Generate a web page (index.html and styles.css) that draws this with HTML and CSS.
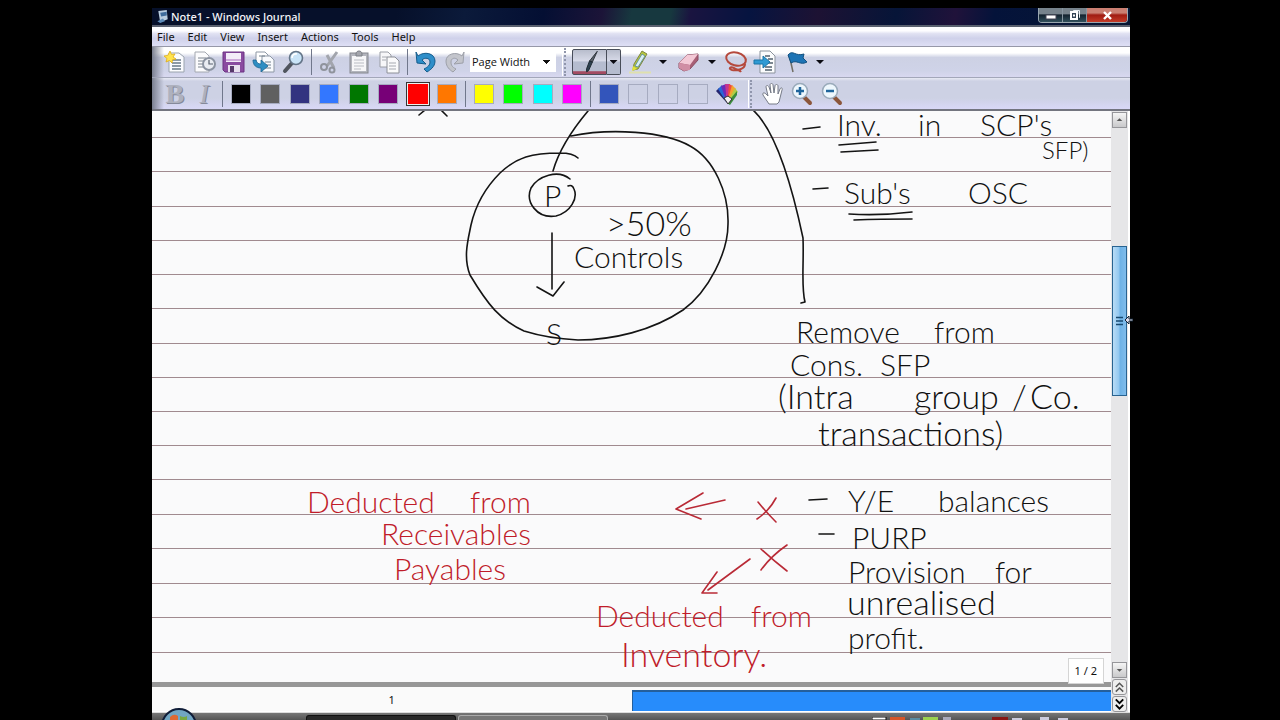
FILE: index.html
```html
<!DOCTYPE html>
<html lang="en">
<head>
<meta charset="utf-8">
<title>Note1 - Windows Journal</title>
<link rel="stylesheet" href="styles.css">
</head>
<body>
<div class="window">
  <header class="titlebar">
    <svg class="app-icon" viewBox="0 0 14 16"><path d="M2 2l9-1 1 10-8 3z" fill="#b9cde0"/><path d="M4 4l7-1v4l-6 1z" fill="#3f6c9c"/><path d="M1 13l6-3 2 3-5 2z" fill="#5d8bb8"/></svg>
    <h1 class="title">Note1 - Windows Journal</h1>
    <div class="caption-buttons">
      <button class="cap" aria-label="Minimize"><svg viewBox="0 0 24 15"><rect x="7" y="7" width="10" height="4" fill="#fff" stroke="#445"/></svg></button>
      <button class="cap" aria-label="Restore"><svg viewBox="0 0 24 15"><path d="M10.500 3V2.500h6v7H16" fill="none" stroke="#e8eef2"/><rect x="8" y="4" width="6" height="7" fill="#345" stroke="#fff" stroke-width="2"/><rect x="10" y="6.500" width="2" height="2" fill="#fff"/></svg></button>
      <button class="cap cap-close" aria-label="Close"><svg viewBox="0 0 40 15"><path d="M17 4l7 7M24 4l-7 7" stroke="#fff" stroke-width="2.400"/></svg></button>
    </div>
  </header>

  <nav class="menubar">
    <button>File</button><button>Edit</button><button>View</button><button>Insert</button><button>Actions</button><button>Tools</button><button>Help</button>
  </nav>

  <div class="toolbar" role="toolbar" aria-label="Standard">
    <div class="group g5">
      <button aria-label="New note"><svg viewBox="0 0 24 24"><path d="M6 3h10l5 4v15H6z" fill="#fbfcff" stroke="#9aa3ad"/><path d="M9 10h9M9 13h9M9 16h9M9 19h9" stroke="#697989" stroke-width="1.300"/><path d="M7 1l1.500 3.500L12 4l-2 3 3 2-3.500.8L9 13l-2.500-2.500L3 12l1-3.500L1 6l3.800-.6z" fill="#ffe34d" stroke="#e0ad17" stroke-width=".8"/></svg></button>
      <button aria-label="Note history"><svg viewBox="0 0 24 24"><path d="M3 2h10l4 4v16H3z" fill="#fbfbfd" stroke="#a4a8b0"/><path d="M6 8h8M6 11h6M6 14h5M6 17h5" stroke="#7d858f"/><circle cx="17" cy="14" r="6" fill="#e9ecf2" stroke="#8b93a1" stroke-width="2"/><path d="M17 10v4h4" fill="none" stroke="#59616e" stroke-width="1.200"/></svg></button>
      <button aria-label="Save"><svg viewBox="0 0 24 24"><path d="M1 2h21v20H3l-2-2z" fill="#8a4ba0" stroke="#6c3383"/><rect x="4" y="3" width="15" height="9" fill="#f3ecf8"/><path d="M4 10h15" stroke="#cda9da" stroke-width="2"/><rect x="6" y="15" width="12" height="7" fill="#e9e0ef"/><rect x="8" y="16" width="4" height="6" fill="#57396a"/></svg></button>
      <button aria-label="Import"><svg viewBox="0 0 24 24"><path d="M4 2h9l3 3v11H4z" fill="#fff" stroke="#8e98a5"/><path d="M10 6h8l4 4v12H10z" fill="#f8fafd" stroke="#8e98a5"/><path d="M7 6h6M13 12h6M13 15h6M13 18h6" stroke="#72808e"/><path d="M1 10c0 5 3 8 8 8v4l7-6-7-6v4c-3 0-4-1-5-4z" fill="#2f8ec3" stroke="#1c6592" stroke-width=".8"/></svg></button>
      <button aria-label="Find"><svg viewBox="0 0 24 24"><path d="M11 13L4 21" stroke="#50555e" stroke-width="4" stroke-linecap="round"/><circle cx="15" cy="8" r="6.500" fill="#c9e4f8" stroke="#637487" stroke-width="1.600"/><path d="M11 8a4 4 0 0 1 5-4" fill="none" stroke="#fff" stroke-width="1.600"/></svg></button>
    </div>
    <span class="sep"></span>
    <div class="group g3">
      <button aria-label="Cut"><svg viewBox="0 0 24 24" fill="none" stroke="#8f939c" stroke-width="2"><path d="M19 2L9 16M9 5l7 13" stroke="#a2a5ad" stroke-width="3"/><circle cx="6" cy="17" r="3"/><circle cx="14" cy="20" r="2.500"/></svg></button>
      <button aria-label="Paste"><svg viewBox="0 0 24 24"><rect x="3" y="3" width="18" height="20" fill="#b3b5bd" stroke="#85888f"/><path d="M5 6h14v15H5z" fill="#f7f7f9"/><path d="M9 4c0-4 6-4 6 0v2H9z" fill="#a4a6ad" stroke="#7d8087"/><path d="M7 10h10M7 13h10M7 16h10M7 19h7" stroke="#b9bcc3"/></svg></button>
      <button aria-label="Copy"><svg viewBox="0 0 24 24"><path d="M3 2h8l3 3v12H3z" fill="#f7f7f9" stroke="#9b9ea6"/><path d="M10 7h8l4 4v12H10z" fill="#fafafb" stroke="#8d9098"/><path d="M5 7h5M5 10h4M12 13h7M12 16h7M12 19h7" stroke="#a6a9b0"/></svg></button>
    </div>
    <span class="sep"></span>
    <div class="group g2">
      <button aria-label="Undo"><svg viewBox="0 0 24 24"><path d="M2 2l2 4c6-5 17-3 17 5 0 6-5 9-8 11l-3-3c4-2 6-4 6-7 0-4-5-5-8-2l4 4-9-1z" fill="#2e8ec9" stroke="#155c8c"/></svg></button>
      <button aria-label="Redo"><svg viewBox="0 0 24 24"><path d="M21 2l-2 4C13 1 3 4 3 11c0 6 4 9 7 11l3-3c-4-2-5-4-5-7 0-4 4-5 7-2l-4 4 9-1z" fill="#c3c5cc" stroke="#9da0a9"/></svg></button>
    </div>
    <select class="zoom-select" aria-label="Zoom"><option>Page Width</option></select>
    <span class="grip"></span>
    <button class="pen active" aria-label="Pen"><svg viewBox="0 0 34 24"><path d="M25 1l-5 11-3-1z" fill="#59616b" stroke="#30363d"/><path d="M17 11l3 1-4 9-2 1 0-3z" fill="#2d4150" stroke="#1d2830"/></svg></button>
    <button class="drop active" aria-label="Pen settings"><i></i></button>
    <button class="tool" aria-label="Highlighter"><svg viewBox="0 0 24 24"><path d="M1 22.500h22" stroke="#dfe0ae" stroke-width="2"/><path d="M14 1l5 3-9 15-5 1 1-6z" fill="#b7c73c" stroke="#7e8640"/><path d="M14 4l3 2-7 11-3-1z" fill="#d8edf4" stroke="#52879b" stroke-width=".8"/><path d="M5 16l-1 5 5-2z" fill="#e3e338"/></svg></button>
    <button class="drop" aria-label="Highlighter settings"><i></i></button>
    <button class="tool" aria-label="Eraser"><svg viewBox="0 0 24 24"><path d="M2 13L10 5l11-1v6l-8 9-6 2-5-3z" fill="#a75f76" stroke="#8a4c61"/><path d="M2 13L10 5l11-1-8 11z" fill="#f3c9d6"/><path d="M2 13l11 2v5l-6 1-5-3z" fill="#d08ea4"/></svg></button>
    <button class="drop" aria-label="Eraser settings"><i></i></button>
    <div class="group g2 wide">
      <button aria-label="Selection tool"><svg viewBox="0 0 24 24" fill="none" stroke="#b5493c" stroke-width="2"><ellipse cx="12" cy="9" rx="10" ry="6.500" transform="rotate(14 12 9)"/><path d="M21 14c0 5-8 7-13 6-4-1-2-4 2-2 3 2 6 2 7 4"/></svg></button>
      <button aria-label="Insert space"><svg viewBox="0 0 24 24"><path d="M7 1h10l5 5v17H7z" fill="#fbfcfd" stroke="#8b939d"/><path d="M12 6h5M12 17h7M12 20h7M15 9h5M15 13h5" stroke="#52606e" stroke-width="1.500"/><path d="M1 10h9V6l7 6-7 6v-4H1z" fill="#2e9ad4" stroke="#1874a6"/></svg></button>
    </div>
    <button class="tool flag" aria-label="Flag"><svg viewBox="0 0 24 24"><path d="M4 4l4 18" stroke="#716d63" stroke-width="1.500"/><path d="M3 5c5-6 7 2 16-1l-1 4 4 4c-7 4-10-3-16 1z" fill="#1d74b5" stroke="#11507f"/></svg></button>
    <button class="drop" aria-label="Flag settings"><i></i></button>
  </div>

  <div class="toolbar" role="toolbar" aria-label="Pen colors">
    <div class="group g2">
      <button class="format" aria-label="Bold"><b>B</b></button>
      <button class="format" aria-label="Italic"><em>I</em></button>
    </div>
    <span class="sep"></span>
    <div class="group g8">
      <button class="swatch black" aria-label="Black"></button><button class="swatch gray" aria-label="Gray"></button><button class="swatch navy" aria-label="Dark blue"></button><button class="swatch blue" aria-label="Blue"></button><button class="swatch green" aria-label="Green"></button><button class="swatch purple" aria-label="Purple"></button><button class="swatch red selected" aria-label="Red"></button><button class="swatch orange" aria-label="Orange"></button>
    </div>
    <span class="sep"></span>
    <div class="group g4">
      <button class="swatch yellow" aria-label="Yellow"></button><button class="swatch lime" aria-label="Lime"></button><button class="swatch cyan" aria-label="Cyan"></button><button class="swatch magenta" aria-label="Magenta"></button>
    </div>
    <span class="sep"></span>
    <div class="group g5">
      <button class="swatch royal" aria-label="Custom blue"></button><button class="swatch" aria-label="Empty color 1"></button><button class="swatch" aria-label="Empty color 2"></button><button class="swatch" aria-label="Empty color 3"></button>
      <button aria-label="More colors"><svg viewBox="0 0 24 24"><path d="M12 21L1 9l3-3z" fill="#25266f"/><path d="M12 21L3 7l4-4z" fill="#2867d5"/><path d="M12 21L6 4l5-2z" fill="#6a2bb8"/><path d="M12 21L10 2l5 0z" fill="#c43390"/><path d="M12 21L14 2l4 2z" fill="#ef4c3f"/><path d="M12 21L17 3l4 4z" fill="#f3a431"/><path d="M12 21L20 6l3 4z" fill="#b4cc45"/><path d="M12 21L22 9l0 4-7 10z" fill="#3b8d3c"/><path d="M9 16l4-2 4 3-4 5z" fill="#f2f2f2" stroke="#333"/></svg></button>
    </div>
    <span class="grip"></span>
    <div class="group g3">
      <button aria-label="Pan"><svg viewBox="0 0 24 24"><path d="M8 22L2 13c-1-2 1-3 3-1l2 2L5 5c0-2 2-2 3 0l2 6-1-8c0-2 3-2 3 0l1 8 1-7c0-2 3-2 3 0v8l2-5c1-2 3-1 2 1l-3 12-2 2z" fill="#fff" stroke="#767b87"/></svg></button>
      <button aria-label="Zoom in"><svg viewBox="0 0 24 24"><path d="M14 15l6 6" stroke="#8c563c" stroke-width="4" stroke-linecap="round"/><circle cx="10" cy="9" r="7.500" fill="#eef7fd" stroke="#9aaaba" stroke-width="1.500"/><path d="M6 9h8M10 5v8" stroke="#1e659c" stroke-width="2.500"/></svg></button>
      <button aria-label="Zoom out"><svg viewBox="0 0 24 24"><path d="M14 15l6 6" stroke="#8c563c" stroke-width="4" stroke-linecap="round"/><circle cx="10" cy="9" r="7.500" fill="#eef7fd" stroke="#9aaaba" stroke-width="1.500"/><path d="M6 9h8" stroke="#1e659c" stroke-width="2.500"/></svg></button>
    </div>
  </div>

  <main class="document">
    <div class="pages">
      <section class="paper">
        <svg class="rules" aria-hidden="true">
          <line x2="100%" y1="26" y2="26"/><line x2="100%" y1="60" y2="60"/><line x2="100%" y1="95" y2="95"/><line x2="100%" y1="129" y2="129"/><line x2="100%" y1="163" y2="163"/><line x2="100%" y1="197" y2="197"/><line x2="100%" y1="232" y2="232"/><line x2="100%" y1="266" y2="266"/><line x2="100%" y1="300" y2="300"/><line x2="100%" y1="334" y2="334"/><line x2="100%" y1="368" y2="368"/><line x2="100%" y1="403" y2="403"/><line x2="100%" y1="437" y2="437"/><line x2="100%" y1="472" y2="472"/><line x2="100%" y1="506" y2="506"/><line x2="100%" y1="541" y2="541"/>
        </svg>
        <svg class="ink">
          <g transform="translate(-152 -111)">
            <path d="M425 110l-6 5M441 110l6 6M588 111C572 130 559 150 553 171M571 136C610 128 664 131 690 146C714 159 729 193 728 224C728 252 709 291 683 310C652 331 612 340 578 340C559 339 540 336 524 331C500 320 488 305 470 275C463 257 468 240 471 225C476 203 487 186 500 173C517 157 532 153 560 153Q573 153 578 158"/>
            <path d="M570 179C558 169 538 176 531 188C525 202 537 219 556 216C571 212 578 198 574 189Q572 184 568 186M552 233V289M537 287L553 296L564 282M753 110C774 129 791 181 803 238C804 264 801 287 805 302L801 303"/>
            <path d="M803 129L820 127M839 145L876 142M841 152L878 150M813 189L828 188M849 214Q879 216 912 212M854 220Q880 219 912 219M809 500L827 499M819 534L834 534"/>
            <g>
              <text y="136"><tspan x="837">Inv.</tspan><tspan x="918">in</tspan><tspan x="980">SCP's</tspan></text>
              <text class="small" x="1042" y="159">SFP)</text>
              <text y="204"><tspan x="844">Sub's</tspan><tspan x="968">OSC</tspan></text>
              <text x="544" y="207">P</text>
              <text class="large" x="606" y="236">&gt;50%</text>
              <text x="574" y="268">Controls</text>
              <text x="546" y="345">S</text>
              <text y="343"><tspan x="796">Remove</tspan><tspan x="934">from</tspan></text>
              <text y="376"><tspan x="790">Cons.</tspan><tspan x="880">SFP</tspan></text>
              <text class="large" y="409"><tspan x="778">(Intra</tspan><tspan x="914">group</tspan><tspan x="1012">/</tspan><tspan x="1030">Co.</tspan></text>
              <text class="large" x="818" y="446">transactions)</text>
              <text y="512"><tspan x="848">Y/E</tspan><tspan x="938">balances</tspan></text>
              <text x="852" y="549">PURP</text>
              <text y="583"><tspan x="848">Provision</tspan><tspan x="995">for</tspan></text>
              <text class="large" x="847" y="615">unrealised</text>
              <text x="848" y="649">profit.</text>
            </g>
            <g class="red-ink">
              <path d="M725 500L686 509M703 493L676 509L701 519M758 502Q766 512 776 522M776 498Q769 511 757 519M761 549Q774 561 787 571M787 545Q771 556 761 570M750 559L708 590M717 572L702 593L717 593"/>
              <text y="513"><tspan x="307">Deducted</tspan><tspan x="470">from</tspan></text>
              <text x="381" y="545">Receivables</text>
              <text x="394" y="580">Payables</text>
              <text y="627"><tspan x="596">Deducted</tspan><tspan x="751">from</tspan></text>
              <text class="large" x="621" y="667">Inventory.</text>
            </g>
          </g>
        </svg>
        <span class="page-count">1 / 2</span>
      </section>
      <footer class="page-footer"><span class="page-number">1</span><span class="page-progress"></span></footer>
    </div>
    <aside class="scrollbar" aria-label="Vertical scroll">
      <button class="arrow" aria-label="Scroll up"><svg viewBox="0 0 14 14"><path d="M4 8l3-3 3 3z" fill="#555"/></svg></button>
      <div class="track"><div class="before"></div><div class="thumb"><svg viewBox="0 0 14 12"><path d="M3 2.500h7M3 6h7M3 9.500h7" stroke="#184a70" stroke-width="1.400"/></svg></div><div class="after"></div></div>
      <button class="arrow" aria-label="Scroll down"><svg viewBox="0 0 14 14"><path d="M4 6l3 3 3-3z" fill="#555"/></svg></button>
      <button class="jump" aria-label="Previous page"><svg viewBox="0 0 14 14" fill="none" stroke="#555" stroke-width="1.600"><path d="M3 7l4-4 4 4M3 12l4-4 4 4"/></svg></button>
      <button class="jump" aria-label="Next page"><svg viewBox="0 0 14 14" fill="none" stroke="#000" stroke-width="2"><path d="M3 2l4 4 4-4M3 8l4 4 4-4"/></svg></button>
      <svg class="pointer" viewBox="0 0 8 10"><path d="M0 5l4-4v3h4v2H4v3z" fill="#dde" stroke="#123"/></svg>
    </aside>
  </main>

  <div class="taskbar">
    <svg class="orb" viewBox="0 0 36 12"><circle cx="18" cy="18" r="17" fill="#71a6c3" stroke="#101d38" stroke-width="2"/><path d="M9 12V9q4-4 8-1v4z" fill="#df6932"/><path d="M19 12V8q4 2 7 0v4z" fill="#79a942"/></svg>
    <span class="quick"></span>
    <span class="task dark"></span><span class="task"></span>
    <svg class="tray" viewBox="0 0 210 3"><path d="M0 0h14v3H0z" fill="#fff" stroke="#111"/><path d="M18 0h15v3H18z" fill="#d65629"/><path d="M38 1h10v2H38z" fill="#588ca3"/><path d="M51 0h15v3H51z" fill="#9bd14f"/><path d="M71 0h8v3h-8z" fill="#aab"/><path d="M120 0h16v3h-16z" fill="#881713"/><path d="M140 1h10v2h-10zM168 0h9v3h-9zM186 1h10v2h-10z" fill="#ccd"/></svg>
  </div>
</div>
</body>
</html>
```
FILE: styles.css
```css
* { box-sizing: border-box; }
body {
  margin: 0;
  background: #000;
  color: #111;
  font: 11px/16px "Noto Sans", "Open Sans", sans-serif;
}
button {
  appearance: none;
  border: 0;
  padding: 0;
  margin: 0;
  background: none;
  color: inherit;
  font: inherit;
}
svg { display: block; }
h1 { margin: 0; }
.window {
  display: flex;
  flex-direction: column;
  height: 100vh;
  padding: 8px 150px 0 152px;
  overflow: hidden;
}
.titlebar {
  display: flex;
  flex: none;
  align-items: center;
  height: 19px;
  padding-left: 4px;
  border-bottom: 2px solid #59606f;
  background: linear-gradient(100deg, #06102a 0 25%, #0b1a3a 32%, #040f33 40%, #1c1438 46%, #17383f 49% 53%, #1a1440 55%, #061440 61%, #1d1233 68%, #061538 76%, #20123a 82%, #04133a 86%, #071633);
}
.app-icon { width: 14px; height: 15px; }
.title {
  flex: 1;
  margin-left: 1px;
  color: #f3f4f8;
  font-size: 11px;
  font-weight: 500;
  line-height: 17px;
}
.caption-buttons {
  display: flex;
  align-self: flex-start;
  margin-right: 2px;
  border: 1px solid #9aa7b0;
  border-top: 0;
  border-radius: 0 0 4px 4px;
  overflow: hidden;
}
.cap {
  width: 24px;
  height: 14px;
  border-right: 1px solid #8795a0;
  background: linear-gradient(#77838c 0 40%, #14232f 50%, #31505c);
}
.cap svg { width: 24px; height: 15px; }
.cap-close {
  width: 40px;
  border: 0;
  background: linear-gradient(#cb7f72 0 35%, #a01c12 50%, #c33b28);
}
.cap-close svg { width: 40px; }
.menubar {
  display: flex;
  flex: none;
  gap: 13px;
  height: 20px;
  padding-left: 5px;
  border-bottom: 1px solid #9698a8;
  background: linear-gradient(#fdfdff 0 20%, #e0e1f2 35%, #cfd1ea 60%, #dedff5);
}
.menubar button { line-height: 17px; }
.toolbar {
  display: flex;
  flex: none;
  align-items: center;
  height: 31px;
  padding-left: 8px;
  border-bottom: 1px solid #a3a7b9;
  background: linear-gradient(90deg, #7a7f8f, transparent 12px), linear-gradient(#fff 0 20%, #cdd1e4 35%, #cfd3e8 80%, #d8d8f0);
}
.toolbar + .toolbar {
  height: 33px;
  border-bottom: 2px solid #73757f;
  background: linear-gradient(90deg, #7a7f8f, transparent 12px), linear-gradient(#e8eaf4, #cdd1e4 10% 65%, #d9d8f7);
}
.group {
  display: grid;
  grid-auto-flow: column;
  grid-auto-columns: 1fr;
  justify-items: center;
  align-items: center;
}
.group svg, .tool svg { width: 24px; height: 24px; }
.g2 { width: 59px; }
.g3 { width: 89px; }
.g4 { width: 118px; }
.g5 { width: 148px; }
.g8 { width: 236px; }
.sep {
  width: 1px;
  height: 26px;
  margin: 0 3px;
  background: #70778b;
}
.grip {
  width: 4px;
  height: 28px;
  margin: 0 6px;
  border-left: 1px solid #fff;
  border-right: 2px dotted #9096ac;
}
.zoom-select {
  appearance: none;
  width: 86px;
  height: 20px;
  padding: 0 2px;
  border: 0;
  border-radius: 0;
  color: #111;
  background: conic-gradient(from -45deg at 50% 100%, #111 90deg, #fff 0) right 6px center / 8px 4px no-repeat #fff;
  font: 11px/18px "Open Sans", sans-serif;
}
.pen {
  width: 35px;
  height: 26px;
  border: 1px solid #484d59;
  border-radius: 2px 0 0 2px;
  background: linear-gradient(#b8bdcc, #d7dae8 45%, #b5bccf 50% 88%, #a34b62 90%);
}
.pen svg { width: 33px; height: 24px; }
.drop { width: 14px; height: 26px; }
.drop i {
  display: block;
  width: 8px;
  height: 4px;
  margin: 0 auto;
  background: #0b0b12;
  clip-path: polygon(0 0, 100% 0, 50% 100%);
}
.drop.active {
  border: 1px solid #484d59;
  border-left: 0;
  border-radius: 0 2px 2px 0;
  background: linear-gradient(#b8bdcc, #d7dae8 45%, #b5bccf 50%);
}
.tool { width: 24px; margin-left: 7px; }
.tool + .drop { margin-left: 4px; }
.wide { margin: 0 2px; }
.flag { margin-left: 3px; }
.format {
  color: #aeb1be;
  font: 28px/28px "Liberation Serif", serif;
  text-shadow: 1px 1px #85899a;
}
.swatch {
  width: 20px;
  height: 20px;
  border: 1px solid #a6abc0;
}
.selected {
  width: 24px;
  height: 24px;
  border-color: #333;
  box-shadow: inset 0 0 0 1px #eee;
}
.black { background: #000; }
.gray { background: #606060; }
.navy { background: #333380; }
.blue { background: #3377ff; }
.green { background: #007700; }
.purple { background: #770077; }
.red { background: #f00; }
.orange { background: #ff7700; }
.yellow { background: #ff0; }
.lime { background: #0f0; }
.cyan { background: #0ff; }
.magenta { background: #f0f; }
.royal { background: #3355bb; }
.document {
  display: flex;
  flex: 1;
  min-height: 0;
  border-right: 2px solid #fff;
}
.pages {
  display: flex;
  flex: 1;
  flex-direction: column;
  min-width: 0;
}
.paper {
  position: relative;
  flex: 1;
  min-height: 0;
  border-bottom: 5px solid #979797;
  background: #fafafb;
}
.rules, .ink {
  position: absolute;
  inset: 0;
  width: 100%;
  height: 100%;
}
.rules { stroke: #a08a8f; stroke-width: 1px; shape-rendering: crispEdges; }
.ink { overflow: hidden; }
.ink path {
  fill: none;
  stroke: #141414;
  stroke-width: 1.6px;
  stroke-linecap: round;
  stroke-linejoin: round;
}
.ink text {
  fill: #111;
  font: 300 30px Lato, "Open Sans", sans-serif;
}
.ink .small { font-size: 24px; }
.ink .large { font-size: 34px; }
.red-ink path { stroke: #b92a36; }
.ink .red-ink text { fill: #c01c2a; }
.page-count {
  position: absolute;
  right: 7px;
  bottom: -2px;
  padding: 4px 6px;
  border: 1px solid #d5d5d5;
  background: #fff;
}
.page-footer {
  display: flex;
  flex: none;
  height: 25px;
  border-bottom: 1px solid #fff;
  background: #fafafa;
}
.page-number { width: 50%; padding-top: 5px; text-align: center; }
.page-progress {
  flex: 1;
  margin-top: 3px;
  border-top: 2px solid #245f9c;
  border-left: 1px solid #245f9c;
  background: #278cfb;
}
.scrollbar {
  position: relative;
  display: flex;
  flex: none;
  flex-direction: column;
  gap: 1px;
  width: 17px;
  padding: 1px 1px 0;
  background: #e6e6e8;
}
.arrow, .jump {
  flex: none;
  height: 16px;
  border: 1px solid #96969a;
  background: linear-gradient(#f5f5f5, #c9c9cb);
}
.jump { border-radius: 3px; background: #eee; }
.arrow svg, .jump svg { width: 13px; height: 14px; }
.track { display: flex; flex: 1; flex-direction: column; }
.before { flex: 118; }
.thumb {
  display: grid;
  flex: 149;
  place-items: center;
  border: 1px solid #286391;
  background: linear-gradient(90deg, #b9dcf6, #93c8f0 45%, #6eb2e6 55%, #80bceb);
}
.thumb svg { width: 14px; height: 12px; }
.after { flex: 267; }
.pointer { position: absolute; top: 204px; right: -5px; width: 8px; height: 10px; }
.taskbar {
  position: relative;
  display: flex;
  flex: none;
  align-items: flex-end;
  gap: 2px;
  height: 8px;
  border-top: 1px solid #ddd;
  background: linear-gradient(#777, #555);
}
.orb { position: absolute; left: 9px; bottom: 0; width: 36px; height: 12px; }
.quick { width: 152px; }
.task {
  width: 150px;
  height: 5px;
  border: 1px solid #aaa;
  border-bottom: 0;
  border-radius: 3px 3px 0 0;
  background: #777;
}
.task.dark { border-color: #111; background: #292929; }
.tray { width: 210px; height: 3px; margin-left: auto; margin-right: 48px; }
```
